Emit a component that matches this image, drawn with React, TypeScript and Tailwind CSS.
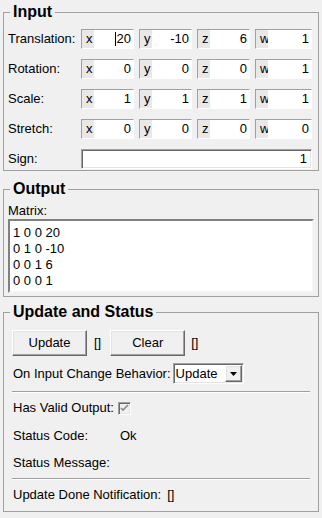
import React from 'react';

const sunken =
  'border border-t-[#a0a0a0] border-l-[#a0a0a0] border-b-white border-r-white shadow-[inset_1px_1px_0_#696969,inset_-1px_-1px_0_#e3e3e3]';
const raised =
  'border border-t-white border-l-white border-b-[#696969] border-r-[#696969] shadow-[inset_-1px_-1px_0_#a0a0a0,inset_1px_1px_0_#e3e3e3]';

interface CoordProps {
  axis: string;
  value: string;
  wide?: boolean;
  caret?: boolean;
}

const Coord: React.FC<CoordProps> = ({ axis, value, wide, caret }) => (
  <div className={`flex h-[20px] ${wide ? 'w-[57px]' : 'w-[53px]'} ${sunken} overflow-hidden`}>
    <span className="w-[12px] shrink-0 bg-[#e8e8e8] pl-[4px] leading-[18px]">{axis}</span>
    <span className="flex flex-1 items-center justify-end bg-white pr-[2px] leading-[18px]">
      {caret && <span className="mr-[1px] h-[14px] w-px bg-black" />}
      {value}
    </span>
  </div>
);

const VecRow: React.FC<{ label: string; vals: string[]; caret?: boolean }> = ({ label, vals, caret }) => (
  <div className="flex h-[20px] items-center">
    <span className="w-[73px] shrink-0">{label}</span>
    <div className="flex gap-[5px]">
      <Coord axis="x" value={vals[0]} caret={caret} />
      <Coord axis="y" value={vals[1]} />
      <Coord axis="z" value={vals[2]} />
      <Coord axis="w" value={vals[3]} wide />
    </div>
  </div>
);

const Legend: React.FC<{ children: React.ReactNode }> = ({ children }) => (
  <legend className="ml-[2px] px-[3px] text-[16px] font-bold leading-[18px]">{children}</legend>
);

const Separator = () => (
  <div className="h-[2px] w-[298px] border-t border-t-[#a0a0a0] border-b border-b-white" />
);

export default function App() {
  return (
    <div className="h-[518px] w-[322px] bg-[#f0f0f0] px-[3px] pt-[3px] font-['Liberation_Sans',Arial,sans-serif] text-[13px] text-black">
      <fieldset className="w-[316px] border border-[#a0a0a0] pl-[4px] pt-[8px] pb-[1px]">
        <Legend>Input</Legend>
        <div className="flex flex-col gap-[10px]">
          <VecRow label="Translation:" vals={['20', '-10', '6', '1']} caret />
          <VecRow label="Rotation:" vals={['0', '0', '0', '1']} />
          <VecRow label="Scale:" vals={['1', '1', '1', '1']} />
          <VecRow label="Stretch:" vals={['0', '0', '0', '0']} />
          <div className="flex h-[20px] items-center">
            <span className="w-[73px] shrink-0">Sign:</span>
            <div className={`flex h-[20px] w-[231px] items-center justify-end bg-white pr-[4px] ${sunken}`}>1</div>
          </div>
        </div>
      </fieldset>

      <fieldset className="mt-[9px] w-[316px] border border-[#a0a0a0] pl-[4px] pb-[3px]">
        <Legend>Output</Legend>
        <div className="pt-[5px] leading-[16px]">Matrix:</div>
        <div className="h-[74px] w-[306px] border-2 border-t-[#808080] border-l-[#808080] border-b-[#f4f4f4] border-r-[#f4f4f4] bg-white pl-[3px] pt-[4px] leading-[16px]">
          <div>1 0 0 20</div>
          <div>0 1 0 -10</div>
          <div>0 0 1 6</div>
          <div>0 0 0 1</div>
        </div>
      </fieldset>

      <fieldset className="mt-[6px] w-[316px] border border-[#a0a0a0] pl-[4px] pb-[6px]">
        <Legend>Update and Status</Legend>
        <div className="pl-[4px] pt-[9px]">
          <div className="flex h-[26px] items-center">
            <button className={`h-[26px] w-[75px] bg-[#f0f0f0] ${raised}`}>Update</button>
            <span className="ml-[7px]">[]</span>
            <button className={`ml-[9px] h-[26px] w-[75px] bg-[#f0f0f0] ${raised}`}>Clear</button>
            <span className="ml-[6px]">[]</span>
          </div>

          <div className="mt-[7px] flex h-[21px] items-center pl-[1px]">
            <span>On Input Change Behavior:</span>
            <div className={`ml-[2px] flex h-[21px] w-[71px] items-center bg-white pl-[2px] ${sunken}`}>
              <span className="flex-1">Update</span>
              <span className={`mr-[1px] flex h-[17px] w-[17px] items-center justify-center bg-[#f0f0f0] ${raised}`}>
                <svg width="7" height="4" viewBox="0 0 7 4">
                  <path d="M0 0h7L3.5 4z" fill="#000" />
                </svg>
              </span>
            </div>
          </div>

          <div className="mt-[7px]">
            <Separator />
          </div>

          <div className="mt-[5px] flex h-[20px] items-center pl-[1px]">
            <span>Has Valid Output:</span>
            <span className={`ml-[4px] flex h-[13px] w-[13px] items-center justify-center bg-[#f0f0f0] ${sunken}`}>
              <svg width="9" height="9" viewBox="0 0 9 9">
                <path d="M1 4l2 2 5-5" stroke="#8a8a8a" strokeWidth="1.6" fill="none" />
              </svg>
            </span>
          </div>
          <div className="mt-[8px] flex h-[20px] items-center pl-[1px]">
            <span className="w-[107px]">Status Code:</span>
            <span>Ok</span>
          </div>
          <div className="mt-[7px] flex h-[20px] items-center pl-[1px]">
            <span>Status Message:</span>
          </div>

          <div className="mt-[5px]">
            <Separator />
          </div>

          <div className="mt-[5px] flex h-[20px] items-center pl-[1px]">
            <span>Update Done Notification:</span>
            <span className="ml-[6px]">[]</span>
          </div>
        </div>
      </fieldset>
    </div>
  );
}
